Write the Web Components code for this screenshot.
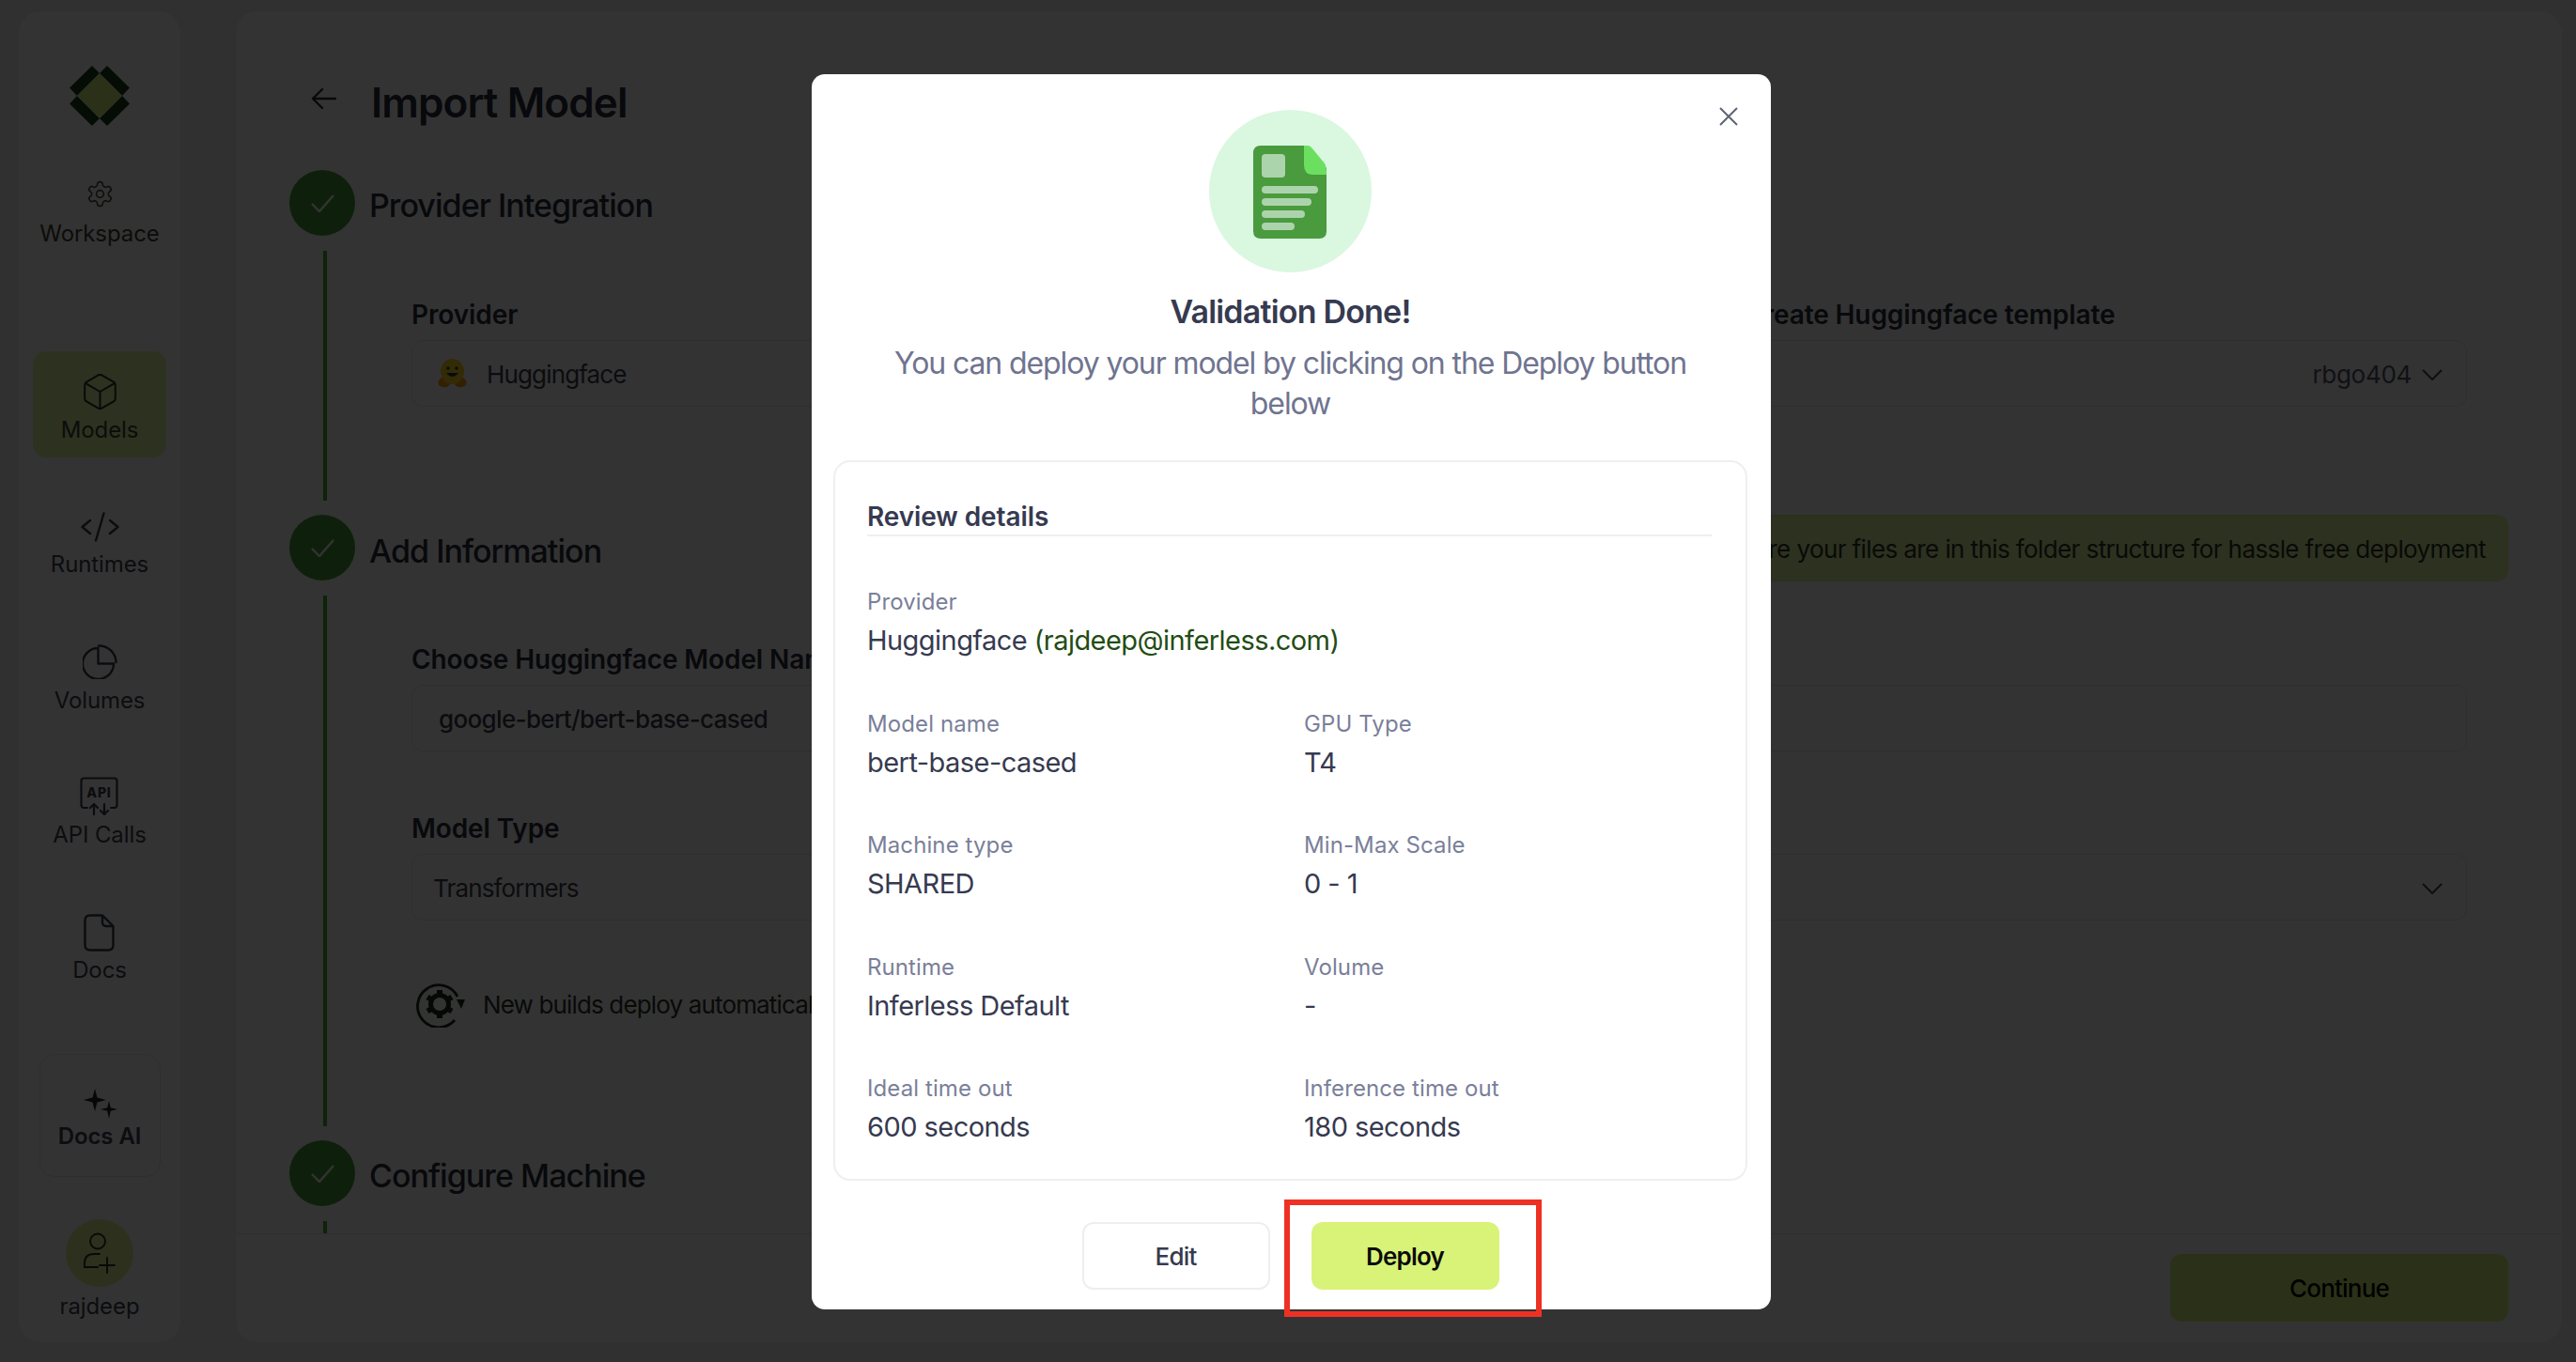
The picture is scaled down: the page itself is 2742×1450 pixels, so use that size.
<!DOCTYPE html>
<html><head><meta charset="utf-8"><title>Import Model</title>
<style>
html,body{margin:0;padding:0;height:100%;overflow:hidden;background:#f0f0f0;font-family:Inter,"Noto Sans",sans-serif;color:#363a50}
svg{display:block}
</style></head><body>
<x-app>
  <x-sidebar>
    <x-logo></x-logo>
    <x-nav-item label="Workspace" style="margin-top:59px" h="26" g="15" tone="dark"><svg slot="icon" width="31" height="31" viewBox="0 0 24 24" fill="none" stroke="#4a5040" stroke-width="1.3"><path d="M12.22 2h-.44a2 2 0 0 0-2 2v.18a2 2 0 0 1-1 1.73l-.43.25a2 2 0 0 1-2 0l-.15-.08a2 2 0 0 0-2.73.73l-.22.38a2 2 0 0 0 .73 2.73l.15.1a2 2 0 0 1 1 1.72v.51a2 2 0 0 1-1 1.74l-.15.09a2 2 0 0 0-.73 2.73l.22.38a2 2 0 0 0 2.73.73l.15-.08a2 2 0 0 1 2 0l.43.25a2 2 0 0 1 1 1.73V20a2 2 0 0 0 2 2h.44a2 2 0 0 0 2-2v-.18a2 2 0 0 1 1-1.73l.43-.25a2 2 0 0 1 2 0l.15.08a2 2 0 0 0 2.73-.73l.22-.39a2 2 0 0 0-.73-2.73l-.15-.08a2 2 0 0 1-1-1.74v-.5a2 2 0 0 1 1-1.74l.15-.09a2 2 0 0 0 .73-2.73l-.22-.38a2 2 0 0 0-2.73-.73l-.15.08a2 2 0 0 1-2 0l-.43-.25a2 2 0 0 1-1-1.73V4a2 2 0 0 0-2-2z"/><circle cx="12" cy="12" r="3"/></svg></x-nav-item>
    <x-nav-item label="Models" active style="margin-top:110px" h="37" g="8" tone="dark"><svg slot="icon" width="37" height="38" viewBox="2.5 1.5 19 21" fill="none" stroke="#2c3028" stroke-width="1.1" stroke-linejoin="round"><path d="M21 8a2 2 0 0 0-1-1.73l-7-4a2 2 0 0 0-2 0l-7 4A2 2 0 0 0 3 8v8a2 2 0 0 0 1 1.73l7 4a2 2 0 0 0 2 0l7-4A2 2 0 0 0 21 16Z"/><path d="m3.3 7 8.7 5 8.7-5"/><path d="M12 22V12"/></svg></x-nav-item>
    <x-nav-item label="Runtimes" style="margin-top:58px" h="31" g="10"><svg slot="icon" width="41" height="32" viewBox="0 0 41 32" fill="none" stroke="#3a3e4c" stroke-width="2.4" stroke-linecap="round" stroke-linejoin="round"><path d="M10 9 1.5 16 10 23"/><path d="M31 9 39.5 16 31 23"/><path d="M24.500 1.500 16 30.500"/></svg></x-nav-item>
    <x-nav-item label="Volumes" style="margin-top:70px" h="37" g="8"><svg slot="icon" width="37" height="37" viewBox="0 0 37 37" fill="none" stroke="#3a3e4c" stroke-width="2.4" stroke-linecap="round" stroke-linejoin="round"><path d="M16.500 4A16.500 16.500 0 1 0 33 20.500H16.500Z"/><path d="M17 1.500A18 18 0 0 1 35.500 19"/></svg></x-nav-item>
    <x-nav-item label="API Calls" style="margin-top:66px" h="41" g="6"><svg slot="icon" width="41" height="41" viewBox="0 0 41 41" fill="none" stroke="#3a3e4c" stroke-width="2.2" stroke-linecap="round" stroke-linejoin="round"><path d="M8 33H4.500Q1.500 33 1.500 30V4.500Q1.500 1.500 4.500 1.500H36.500Q39.500 1.500 39.500 4.500V30Q39.500 33 36.500 33H33"/><text x="20.500" y="22" text-anchor="middle" font-family="Inter,sans-serif" font-weight="800" font-size="14" letter-spacing=".8" fill="#3a3e4c" stroke="none">API</text><path d="M15 40V29M11 33l4-4 4 4"/><path d="M26 29V40M22 36l4 4 4-4"/></svg></x-nav-item>
    <x-nav-item label="Docs" style="margin-top:69px" h="39" g="6"><svg slot="icon" width="33" height="40" viewBox="0 0 33 40" fill="none" stroke="#3a3e4c" stroke-width="2.4" stroke-linejoin="round"><path d="M20 1.500H7Q1.500 1.500 1.500 7V33Q1.500 38.500 7 38.500H26Q31.500 38.500 31.500 33V13Z"/><path d="M20 1.500V9Q20 13 24 13H31.500"/></svg></x-nav-item>
    <x-nav-item label="Docs AI" boxed style="margin-top:74px" h="31" g="5"><svg slot="icon" width="37" height="32" viewBox="0 0 37 32" fill="#20232c"><path d="M13 0 15.500 9.500 25 12 15.500 14.500 13 24 10.500 14.500 1 12 10.500 9.500Z"/><path d="M28 13 29.800 20.200 37 22 29.800 23.800 28 32 26.200 23.800 19 22 26.200 20.200Z"/></svg></x-nav-item>
    <x-nav-item label="rajdeep" avatar style="margin-top:45px" h="72" g="6"><svg slot="icon" width="36" height="44" viewBox="0 0 36 44" fill="none" stroke="#2c3028" stroke-width="1.900" stroke-linecap="round"><circle cx="16" cy="9.500" r="8"/><path d="M18 23H12Q2 23 2 33V37H16"/><path d="M26 27V43M18 35H34"/></svg></x-nav-item>
  </x-sidebar>

  <x-main>
    <x-page-head>Import Model</x-page-head>
    <x-step name="Provider Integration" line="266">
      <x-panel>
        <x-form-row>
          <x-field label="Provider"><x-input><svg slot="lead" width="33" height="31" viewBox="0 0 33 31"><path d="M5 20 Q0 24 2 28 Q5 31 11 30 L15 26 Z" fill="#ff9d0b"/><path d="M28 20 Q33 24 31 28 Q28 31 22 30 L18 26 Z" fill="#ff9d0b"/><ellipse cx="16.500" cy="13.500" rx="12.500" ry="13.500" fill="#ffd21e"/><circle cx="12" cy="10" r="1.800" fill="#3a3b45"/><circle cx="21" cy="10" r="1.800" fill="#3a3b45"/><path d="M10 15 Q16.500 23 23 15Z" fill="#3a3b45"/></svg>Huggingface</x-input></x-field>
          <x-field label="Create Huggingface template"><x-input end="rbgo404" chevron></x-input></x-field>
        </x-form-row>
      </x-panel>
    </x-step>
    <x-step name="Add Information" line="565" banner="Make sure your files are in this folder structure for hassle free deployment">
      <x-panel>
        <x-field label="Choose Huggingface Model Name"><x-input strong indent>google-bert/bert-base-cased</x-input></x-field>
        <x-field label="Model Type" style="margin-top:64px"><x-input chevron>Transformers</x-input></x-field>
        <x-auto-note><svg slot="icon" width="53" height="49" viewBox="0 0 53 49" fill="none"><path d="M44 16A22.500 22.500 0 1 0 41 41" stroke="#1c2a16" stroke-width="2.800"/><path d="M43 19H52L48 29Z" fill="#1c2a16"/><circle cx="25" cy="24" r="9.500" stroke="#1c2a16" stroke-width="5"/><path d="M25 9V14M25 34V39M38 16.500 33.660 19M38 31.500 33.660 29M12 16.500 16.340 19M12 31.500 16.340 29" stroke="#1c2a16" stroke-width="6"/></svg>New builds deploy automatically</x-auto-note>
      </x-panel>
    </x-step>
    <x-step name="Configure Machine" line="100"></x-step>
    <x-footer slot="footer"><x-btn variant="continue">Continue</x-btn></x-footer>
  </x-main>
</x-app>

<x-overlay>
  <x-modal>
    <x-doc-badge slot="badge"></x-doc-badge>
    <span slot="title">Validation Done!</span>
    <span slot="subtitle">You can deploy your model by clicking on the Deploy button below</span>
    <x-review>
      <x-detail label="Provider" wide>Huggingface <x-accent>(rajdeep@inferless.com)</x-accent></x-detail>
      <x-detail label="Model name">bert-base-cased</x-detail>
      <x-detail label="GPU Type">T4</x-detail>
      <x-detail label="Machine type">SHARED</x-detail>
      <x-detail label="Min-Max Scale">0 - 1</x-detail>
      <x-detail label="Runtime">Inferless Default</x-detail>
      <x-detail label="Volume">-</x-detail>
      <x-detail label="Ideal time out">600 seconds</x-detail>
      <x-detail label="Inference time out">180 seconds</x-detail>
    </x-review>
    <x-btn slot="actions" variant="edit">Edit</x-btn>
    <x-btn slot="actions" variant="deploy">Deploy</x-btn>
  </x-modal>
  <x-annotation></x-annotation>
</x-overlay>

<script>
function def(name, html){
  customElements.define(name, class extends HTMLElement{
    constructor(){super();this.attachShadow({mode:'open'});}
    connectedCallback(){
      if(this.shadowRoot.childNodes.length) return;
      this.shadowRoot.innerHTML = typeof html==='function'?html(this):html;
    }
  });
}
const attr=(e,n,d='')=>e.getAttribute(n)??d;
const chev='<svg width="22" height="12" viewBox="0 0 22 12" fill="none" stroke="#44475a" stroke-width="2"><path d="M1 1 11 11 21 1"/></svg>';

def('x-app',`<style>:host{display:grid;grid-template-columns:172px 1fr;column-gap:59px;height:1450px;box-sizing:border-box;padding:12px 15px 21px 20px}</style><slot></slot>`);

def('x-sidebar',`<style>:host{display:flex;flex-direction:column;align-items:center;background:#fff;border-radius:24px;padding-top:58px;min-height:0;overflow:hidden;box-sizing:border-box}</style><slot></slot>`);

def('x-logo',`<style>:host{display:block;width:64px;height:64px;flex:none}</style>
<svg width="64" height="64" viewBox="0 0 64 64"><g fill="#1a3d1a"><path d="M24 0 0 23.500 8 32 32 8Z"/><path d="M40 0 64 23.500 56 32 32 8Z"/><path d="M24 64 0 40.500 8 32 32 56Z"/><path d="M40 64 64 40.500 56 32 32 56Z"/></g><path d="M32 8 56 32 32 56 8 32Z" fill="#d8f378"/></svg>`);

def('x-nav-item',e=>{
  const active=e.hasAttribute('active'),boxed=e.hasAttribute('boxed'),av=e.hasAttribute('avatar');
  return `<style>
  :host{display:flex;flex-direction:column;align-items:center;flex:none;box-sizing:border-box;
   ${active?'width:142px;height:113px;padding-top:24px;background:#e2f3a0;border-radius:14px;':''}
   ${boxed?'width:129px;height:131px;padding-top:36px;border:1px solid #e6e6e6;border-radius:16px;':''}}
  .i{height:${attr(e,'h')}px;display:flex;align-items:center;justify-content:center;${av?'width:72px;border-radius:50%;background:#e0ee92;':''}}
  .l{margin-top:${attr(e,'g')}px;font-size:24px;line-height:30px;letter-spacing:-.1px;white-space:nowrap;font-weight:${boxed?600:400};color:${active||attr(e,'tone')?'#3e4236':'#3f4250'}}
  </style><div class="i"><slot name="icon"></slot></div><div class="l">${attr(e,'label')}</div>`});

def('x-main',`<style>:host{display:flex;flex-direction:column;background:#fff;border-radius:24px;overflow:hidden;min-height:0}
 .s{flex:1;min-height:0;overflow:hidden;padding:69px 57px 0 57px}</style>
 <div class="s"><slot></slot></div><slot name="footer"></slot>`);

def('x-page-head',`<style>:host{display:flex;align-items:center;height:56px;margin-bottom:44px;font-size:44px;line-height:56px;font-weight:600;letter-spacing:-.9px;color:#2a2d3c}
 svg{margin:-8px 37px 0 23px}</style>
 <svg width="27" height="24" viewBox="0 0 27 24" fill="none" stroke="#2a2d3c" stroke-width="2.400" stroke-linecap="round" stroke-linejoin="round"><path d="M26 12H2M12 2 2 12 12 22"/></svg><slot></slot>`);

def('x-step',e=>{
 const b=attr(e,'banner');
 return `<style>:host{display:block}
 .h{display:flex;align-items:center;height:70px}
 .c{width:70px;height:70px;border-radius:50%;background:#48a238;display:flex;align-items:center;justify-content:center;flex:none}
 .t{margin-left:15px;font-size:34px;line-height:44px;font-weight:500;letter-spacing:-.95px;color:#2a2d3c;padding-top:${b?8:6}px;white-space:nowrap}
 .b{margin-left:auto;height:71px;flex:none;display:flex;align-items:center;padding:2px 23px 0 70px;background:#e2f3a0;border:1px solid #dcec98;box-sizing:border-box;border-radius:12px;font-size:26px;color:#30332a;letter-spacing:-.6px;white-space:nowrap}
 .r{display:grid;grid-template-columns:88px 1fr}
 .ln{margin:16px 0 15px 36px;height:${attr(e,'line')}px;width:4px;background:#40b030}
 .ct{min-width:0;margin-top:27px}
 </style>
 <div class="h"><div class="c"><svg width="25" height="19" viewBox="0 0 25 19" fill="none" stroke="#fff" stroke-width="2.400"><path d="M1 10 9 18 24 1"/></svg></div><div class="t">${attr(e,'name')}</div>${b?`<div class="b">${b}</div>`:''}</div>
 <div class="r"><div class="ln"></div><div class="ct"><slot></slot></div></div>`});

def('x-panel',`<style>:host{display:block;padding:38px 43px 43px 41px;border:1px solid #fbfbfb;border-radius:20px;margin-bottom:57px}</style><slot></slot>`);
def('x-form-row',`<style>:host{display:grid;grid-template-columns:1fr 769px;column-gap:24px}</style><slot></slot>`);

def('x-field',e=>`<style>:host{display:block}
 .l{font-size:28px;line-height:36px;font-weight:600;letter-spacing:-.1px;margin-bottom:9px;color:#2a2d3c;white-space:nowrap}</style>
 <div class="l">${attr(e,'label')}</div><slot></slot>`);

def('x-input',e=>{
 const ind=e.hasAttribute('indent'),st=e.hasAttribute('strong');
 return `<style>:host{display:flex;align-items:center;height:71px;box-sizing:border-box;border:1px solid #e6e6e6;border-radius:12px;padding:2px 25px 0 ${ind?28:22}px;font-size:26px;color:#3c3f4e;letter-spacing:${st?-.65:-.85}px;font-weight:${st?500:400};white-space:nowrap}
 ::slotted(svg){margin:-2px 20px 0 4px;flex:none}
 .e{margin-left:auto;display:flex;align-items:center;gap:11px;color:#55586a;letter-spacing:-.3px}</style>
 <slot name="lead"></slot><slot></slot><div class="e">${attr(e,'end')}${e.hasAttribute('chevron')?chev:''}</div>`});

def('x-auto-note',`<style>:host{display:flex;align-items:center;margin-top:65px;margin-left:5px;height:49px;font-size:26px;color:#30332a;letter-spacing:-.85px;white-space:nowrap}
 ::slotted(svg){margin-right:18px;flex:none}</style><slot name="icon"></slot><slot></slot>`);

def('x-footer',`<style>:host{display:flex;justify-content:flex-end;height:116px;box-sizing:border-box;border-top:1px solid #e6e6e6;padding:21px 57px 0 0}</style><slot></slot>`);

def('x-btn',e=>{
 const v=attr(e,'variant');
 const css={continue:'width:360px;background:#d8f378;color:#000;font-weight:500;',
  edit:'width:200px;background:#fff;border:2px solid #eeeeee;color:#363a50;font-weight:500;',
  deploy:'width:200px;background:#d8f378;color:#0b0b0b;font-weight:600;'}[v];
 return `<style>:host{display:flex;align-items:center;justify-content:center;height:72px;box-sizing:border-box;border-radius:12px;font-size:26px;letter-spacing:-.8px;${css}}</style><slot></slot>`});

def('x-overlay',`<style>:host{position:fixed;inset:0;background:rgba(0,0,0,.8);display:block;z-index:10}</style><slot></slot>`);

def('x-modal',`<style>:host{position:absolute;left:864px;top:79px;width:1021px;height:1315px;box-sizing:border-box;background:#fff;border-radius:14px;padding:38px 26px 0 24px;display:flex;flex-direction:column;align-items:center}
 .x{position:absolute;left:966px;top:35px}
 h2{margin:22px 0 0;font-size:34px;line-height:40px;font-weight:600;letter-spacing:-.8px;color:#363a50}
 p{margin:13px 0 0;width:880px;text-align:center;font-size:32px;line-height:43px;letter-spacing:-1.1px;color:#6f7490}
 .a{display:flex;gap:44px;margin-top:44px}
 </style>
 <svg class="x" width="20" height="20" viewBox="0 0 20 20" fill="none" stroke="#5f6373" stroke-width="2"><path d="M1 1 19 19M19 1 1 19"/></svg>
 <slot name="badge"></slot><h2><slot name="title"></slot></h2><p><slot name="subtitle"></slot></p>
 <slot></slot><div class="a"><slot name="actions"></slot></div>`);

def('x-doc-badge',`<style>:host{display:flex;align-items:center;justify-content:center;width:173px;height:173px;border-radius:50%;background:#daf7e0;flex:none}</style>
 <svg width="78" height="99" viewBox="0 0 78 99" style="margin-left:-1px;margin-top:2px"><path d="M8 0H56L78 24V91Q78 99 70 99H8Q0 99 0 91V8Q0 0 8 0Z" fill="#4a9a3e"/><path d="M54 0H58Q60 0 62 2L76 19Q78 22 78 31H64Q54 31 54 21Z" fill="#6be060"/><g fill="#abd4ac"><rect x="9" y="9" width="25" height="25" rx="4"/><rect x="9" y="43" width="60" height="8" rx="4"/><rect x="9" y="56" width="53" height="8" rx="4"/><rect x="9" y="69" width="46" height="8" rx="4"/><rect x="9" y="82" width="35" height="8" rx="4"/></g></svg>`);

def('x-review',`<style>:host{display:block;box-sizing:border-box;width:973px;height:767px;margin-top:39px;border:2px solid #efefef;border-radius:18px;padding:40px 36px 0 34px}
 .h{font-size:28px;line-height:36px;font-weight:600;letter-spacing:-.1px;color:#363a50;border-bottom:2px solid #efefef;padding-bottom:1px;margin-bottom:55px}
 .g{display:grid;grid-template-columns:465px 1fr;row-gap:53.5px}</style>
 <div class="h">Review details</div><div class="g"><slot></slot></div>`);

def('x-detail',e=>`<style>:host{display:block;${e.hasAttribute('wide')?'grid-column:1 / -1;':''}}
 .l{font-size:24px;line-height:30px;letter-spacing:.1px;color:#7a7f9a;margin-bottom:6px}
 .v{font-size:29px;line-height:40px;letter-spacing:-.55px;color:#363a50;white-space:nowrap}</style>
 <div class="l">${attr(e,'label')}</div><div class="v"><slot></slot></div>`);

def('x-accent',`<style>:host{color:#1f4d14}</style><slot></slot>`);

def('x-annotation',`<style>:host{position:absolute;left:1367px;top:1277px;width:274px;height:125px;box-sizing:border-box;border:6px solid #ee3124}</style>`);
</script>
</body></html>
